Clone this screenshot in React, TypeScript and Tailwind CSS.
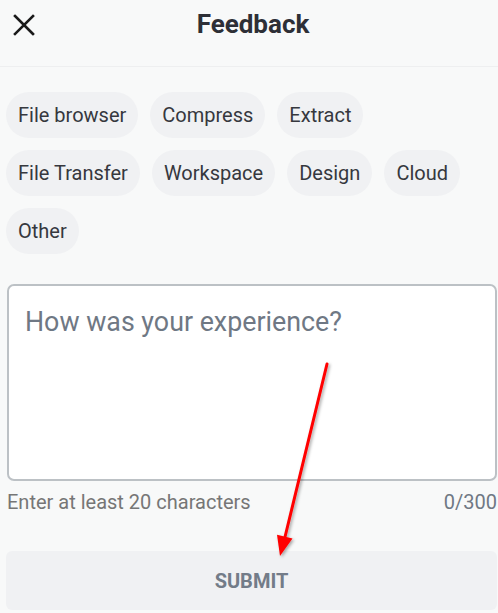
import React from 'react'

const tags = ['File browser', 'Compress', 'Extract', 'File Transfer', 'Workspace', 'Design', 'Cloud', 'Other']

const Feedback = () => {
    return (
        <div className="relative w-[498px] h-[613px] overflow-hidden bg-[#f8f9f9] font-['Roboto',sans-serif]">
            {/* top bar */}
            <div className="h-[67px] border-b border-[#eeeff0]">
                <div className="grid h-[49px] grid-cols-[56px_1fr_48px] items-center">
                    <button className="flex h-[48px] w-[48px] items-center justify-center">
                        <svg width="24" height="24" viewBox="0 0 24 24">
                            <path d="M3 3 L21 21 M21 3 L3 21" stroke="#1a1a1a" strokeWidth="2.6" strokeLinecap="square" />
                        </svg>
                    </button>
                    <h1 className="text-center text-[26px] font-bold text-[#2d2f36]">Feedback</h1>
                    <div />
                </div>
            </div>

            {/* tags */}
            <div className="mt-[25px] flex flex-wrap gap-[12px] px-[6px]">
                {tags.map((t) => (
                    <span
                        key={t}
                        className="flex h-[46px] items-center rounded-full bg-[#f0f1f3] px-[12px] text-[20px] text-[#36383e]"
                    >
                        {t}
                    </span>
                ))}
            </div>

            {/* textarea */}
            <div className="ml-[7px] mr-[1px] mt-[30px]">
                <div className="h-[197px] rounded-[7px] border-2 border-[#bcc1c5] bg-white px-[16px] pt-[20px]">
                    <p className="text-[26.8px] leading-[32px] text-[#6f7884]">How was your experience?</p>
                </div>
                <div className="mt-[8px] flex items-center justify-between text-[20px] leading-[26px]">
                    <span className="text-[#767676]">Enter at least 20 characters</span>
                    <span className="text-[#6f7884]">0/300</span>
                </div>
            </div>

            <button className="mx-[6px] mt-[36px] flex h-[59px] w-[491px] items-center justify-center rounded-[6px] bg-[#f0f1f3] text-[20px] font-bold text-[#737c88]">
                SUBMIT
            </button>

            {/* annotation arrow */}
            <svg className="pointer-events-none absolute inset-0" width="498" height="613">
                <defs>
                    <filter id="sh" x="-50%" y="-50%" width="200%" height="200%">
                        <feDropShadow dx="1.5" dy="1.5" stdDeviation="1.5" floodColor="#000" floodOpacity="0.35" />
                    </filter>
                </defs>
                <g filter="url(#sh)">
                    <line x1="327" y1="364" x2="285" y2="537" stroke="#ff0000" strokeWidth="3" strokeLinecap="round" />
                    <polygon points="280,556 277,534.7 292.5,538.5" fill="#ff0000" />
                </g>
            </svg>
        </div>
    )
}

export default function App() {
    return <Feedback />
}
